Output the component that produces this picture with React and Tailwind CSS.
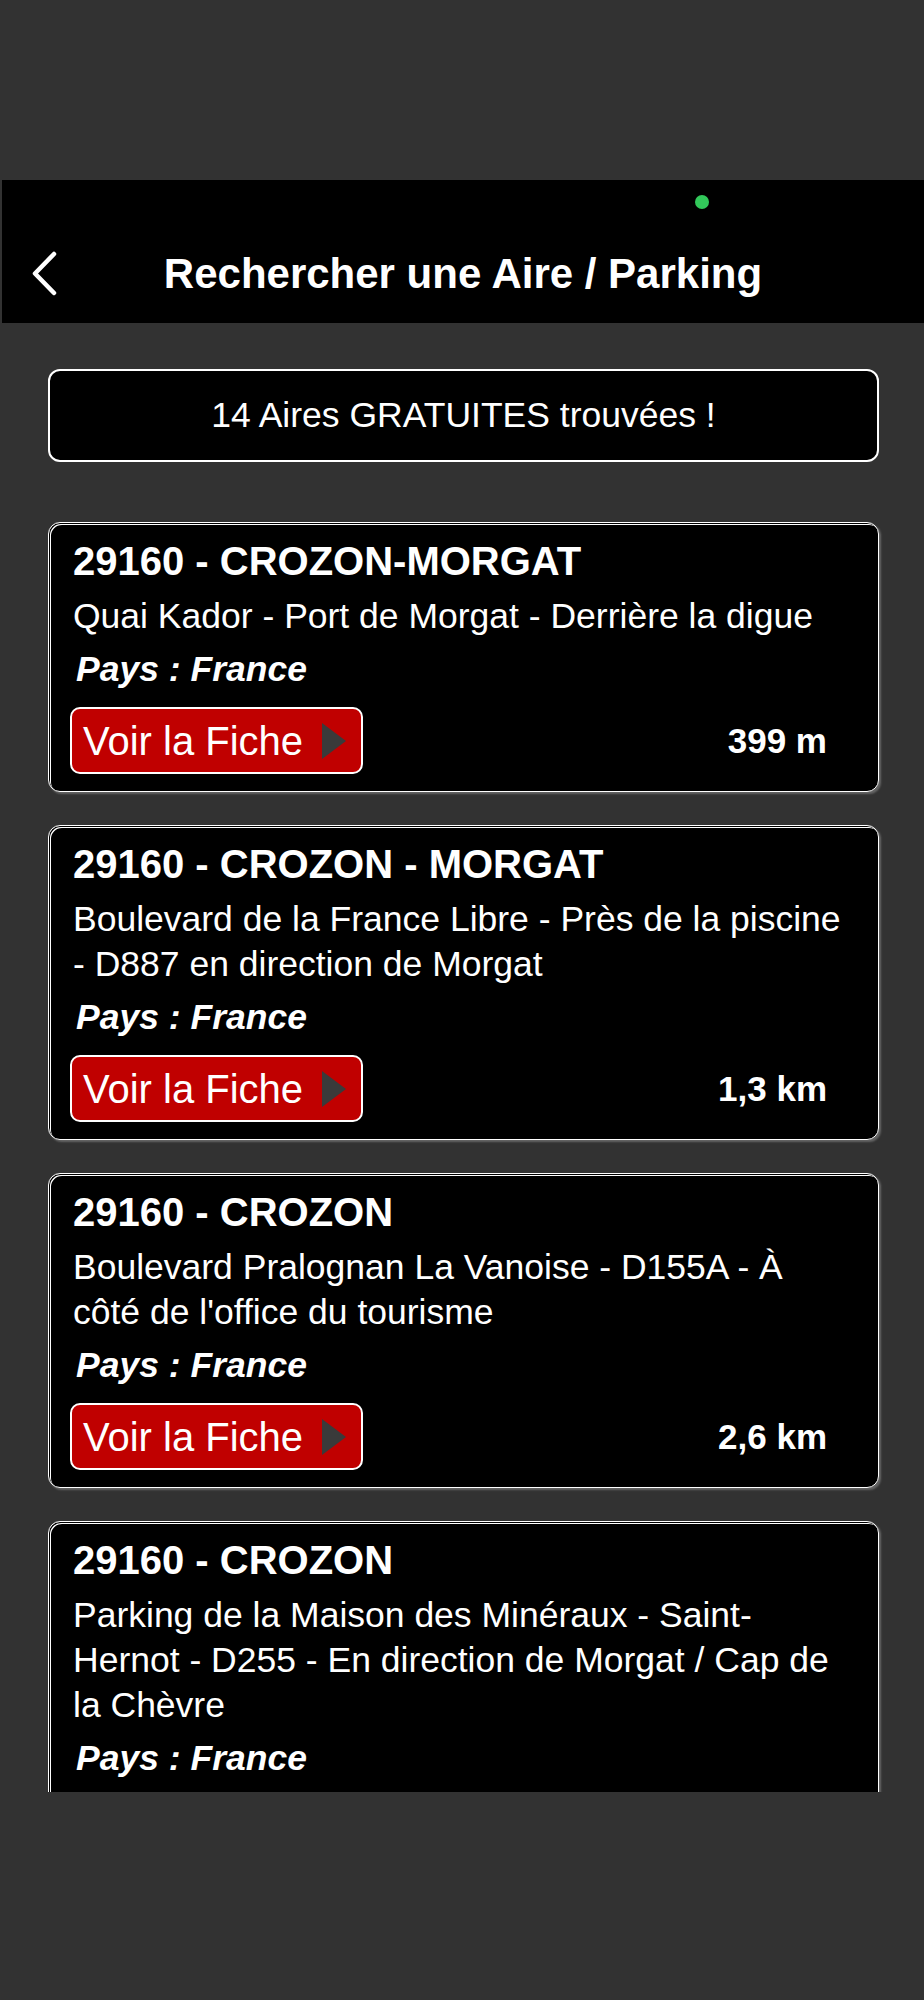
import React from "react";

const aires = [
  {
    titre: "29160 - CROZON-MORGAT",
    adresse: "Quai Kador - Port de Morgat - Derrière la digue",
    distance: "399 m",
  },
  {
    titre: "29160 - CROZON - MORGAT",
    adresse:
      "Boulevard de la France Libre - Près de la piscine - D887 en direction de Morgat",
    distance: "1,3 km",
  },
  {
    titre: "29160 - CROZON",
    adresse:
      "Boulevard Pralognan La Vanoise - D155A - À côté de l'office du tourisme",
    distance: "2,6 km",
  },
  {
    titre: "29160 - CROZON",
    adresse:
      "Parking de la Maison des Minéraux - Saint-Hernot - D255 - En direction de Morgat / Cap de la Chèvre",
    distance: null,
  },
];

function AireCard({ aire }) {
  // la derniere carte est coupee par le bas de la liste
  const coupee = !aire.distance;
  return (
    <div
      className={
        "w-[831px] rounded-[12px] border border-white bg-black pt-[16px] pl-[24px] pr-[29px] shadow-[inset_1px_1px_0_#000,inset_2px_2px_0_#fff,2px_2px_2px_rgba(255,255,255,0.25)] " +
        (coupee ? "pb-[120px]" : "pb-[17px]")
      }
    >
      <div className="text-[40px] font-bold leading-[45px] whitespace-nowrap">
        {aire.titre}
      </div>
      <div className="mt-[10px] text-[35.5px] leading-[45px]">
        {aire.adresse}
      </div>
      <div className="mt-[9px] ml-[3px] text-[35.5px] font-bold italic leading-[43px]">
        Pays : France
      </div>
      {!coupee && (
        <div className="mt-[16px] flex items-center justify-between">
          <button className="-ml-[3px] flex h-[67px] w-[293px] items-center rounded-[10px] border-2 border-white bg-[#c00000] pl-[11px]">
            <span className="text-[40px] leading-none text-white">
              Voir la Fiche
            </span>
            <svg width="24" height="36" viewBox="0 0 24 36" className="ml-[19px]">
              <polygon points="0,0 24,18 0,36" fill="#3a3a3a" />
            </svg>
          </button>
          <div className="pr-[22px] text-[35px] font-bold leading-none">
            {aire.distance}
          </div>
        </div>
      )}
    </div>
  );
}

export default function App() {
  return (
    <div className="min-h-[2000px] bg-[#323232] font-['Liberation_Sans',Arial,sans-serif] text-white">
      <div className="h-[180px]" />

      <header className="relative ml-[2px] h-[143px] bg-black pt-[70px]">
        <div className="absolute left-[693px] top-[15px] h-[14px] w-[14px] rounded-full bg-[#32c85a]" />
        <svg
          width="28"
          height="46"
          viewBox="0 0 28 46"
          className="absolute left-[28px] top-[71px]"
        >
          <polyline
            points="24,3 5,22.5 24,42"
            fill="none"
            stroke="white"
            strokeWidth="4.5"
            strokeLinecap="round"
            strokeLinejoin="round"
          />
        </svg>
        <h1 className="text-center text-[42px] font-bold leading-[48px]">
          Rechercher une Aire / Parking
        </h1>
      </header>

      <main className="h-[1469px] overflow-hidden pt-[46px] pl-[48px]">
        <div className="flex h-[93px] w-[831px] items-center justify-center rounded-[12px] border-2 border-white bg-black">
          <span className="text-[35.5px] leading-none">
            14 Aires GRATUITES trouvées !
          </span>
        </div>

        <div className="mt-[60px] flex flex-col gap-[33px]">
          {aires.map((aire, index) => (
            <AireCard key={index} aire={aire} />
          ))}
        </div>
      </main>
    </div>
  );
}
